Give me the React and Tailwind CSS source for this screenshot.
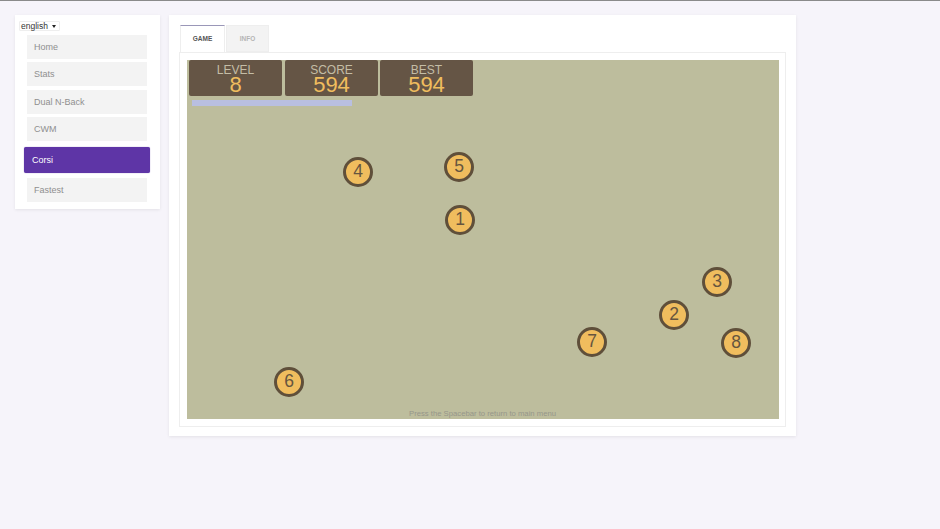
const FONT = { fontFamily: '"Liberation Sans", Arial, sans-serif' };
const font = "font-['Liberation_Sans',Arial,sans-serif]";

const nav = [
  { label: "Home", cls: "h-6 mt-[4px]" },
  { label: "Stats", cls: "h-6 mt-[3px]" },
  { label: "Dual N-Back", cls: "h-6 mt-[4px]" },
  { label: "CWM", cls: "h-6 mt-[3px]" },
];

const stats = [
  { k: "LEVEL", v: "8", cls: "" },
  { k: "SCORE", v: "594", cls: "ml-[1px]" },
  { k: "BEST", v: "594", cls: "" },
];

const dots = [
  { n: 4, left: "left-[156px]", top: "top-[97px]" },
  { n: 5, left: "left-[257px]", top: "top-[92px]" },
  { n: 1, left: "left-[258px]", top: "top-[145px]" },
  { n: 3, left: "left-[515px]", top: "top-[207px]" },
  { n: 2, left: "left-[472px]", top: "top-[240px]" },
  { n: 7, left: "left-[390px]", top: "top-[267px]" },
  { n: 8, left: "left-[534px]", top: "top-[268px]" },
  { n: 6, left: "left-[87px]", top: "top-[307px]" },
];

function Item({ label, cls }) {
  return (
    <div className={`${cls} mx-3 w-[120px] bg-[#f3f3f3] pl-[7px] text-[9px] leading-6 text-[#8f8f8f]`}>
      {label}
    </div>
  );
}

export default function App() {
  return (
    <div className={`${font} h-[529px] w-[940px] overflow-hidden border-t border-[#8a8a8a] bg-[#f6f4fa]`} style={FONT}>
      <div className="flex items-start gap-[9px] pl-[15px] pt-[14px]">
        <aside className="h-[194px] w-[145px] bg-white pt-[6px] shadow-[0_1px_3px_rgba(0,0,0,0.08)]">
          <div className="ml-1 flex h-[10px] w-[41px] items-center justify-between rounded-[1px] border border-[#eeeeee] bg-white pl-[1px] pr-[3px] text-[8.5px] leading-none text-[#333333]">
            <span>english</span>
            <span className="h-0 w-0 border-x-[2px] border-t-[3px] border-x-transparent border-t-[#222222]" />
          </div>
          <div>
            {nav.map((n) => (
              <Item key={n.label} {...n} />
            ))}
          </div>
          <div className="mx-[9px] mt-[6px] h-[26px] w-[126px] rounded-[2px] bg-[#5e35a6] pl-2 text-[9px] leading-[26px] text-white shadow-[0_0_1px_rgba(94,53,166,0.8)]">
            Corsi
          </div>
          <Item label="Fastest" cls="h-6 mt-[5px]" />
        </aside>

        <main className="h-[421px] w-[627px] bg-white px-[10px] pt-[10px] shadow-[0_1px_3px_rgba(0,0,0,0.08)]">
          <div className="flex h-[27px] items-end gap-px pl-px">
            <div className="flex h-[27px] w-[45px] items-center justify-center border-x border-t border-x-[#eeeeee] border-t-[#9a97b8] bg-white text-[6.5px] font-bold text-[#555555]">
              GAME
            </div>
            <div className="flex h-[27px] w-[43px] items-center justify-center border border-[#eeeeee] bg-[#f3f3f3] text-[6.5px] font-bold text-[#b5b5b5]">
              INFO
            </div>
          </div>
          <div className="h-[375px] w-[607px] border border-[#eeeeee] bg-white pl-[7px] pr-[6px] pt-[7px]">
            <div className="relative h-[359px] w-[592px] bg-[#bdbd9d]">
              <div className="flex gap-[2px] pl-[2px]">
                {stats.map((s) => (
                  <div
                    key={s.k}
                    className={`flex h-9 w-[93px] flex-col items-center rounded-[2px] bg-[#655545] pt-[4px] text-center ${s.cls}`}
                  >
                    <div className="text-[12px] leading-[12px] text-[#c4bda6]">{s.k}</div>
                    <div className="-mt-px text-[22px] leading-[20px] text-[#f0bd5e]">{s.v}</div>
                  </div>
                ))}
              </div>
              <div className="ml-[5px] mt-1 h-[6px] w-[160px] bg-[#b9bfe0]" />
              {dots.map((d) => (
                <div
                  key={d.n}
                  className={`absolute ${d.left} ${d.top} flex h-[30px] w-[30px] items-center justify-center rounded-full border-[3px] border-[#5f4f3a] bg-[#f0bd5e] text-[17.5px] leading-none text-[#66553f]`}
                >
                  {d.n}
                </div>
              ))}
              <div className="absolute bottom-px left-0 w-full pr-[1px] text-center text-[7.7px] leading-[9px] text-[#96968a]">
                Press the Spacebar to return to main menu
              </div>
            </div>
          </div>
        </main>
      </div>
    </div>
  );
}
